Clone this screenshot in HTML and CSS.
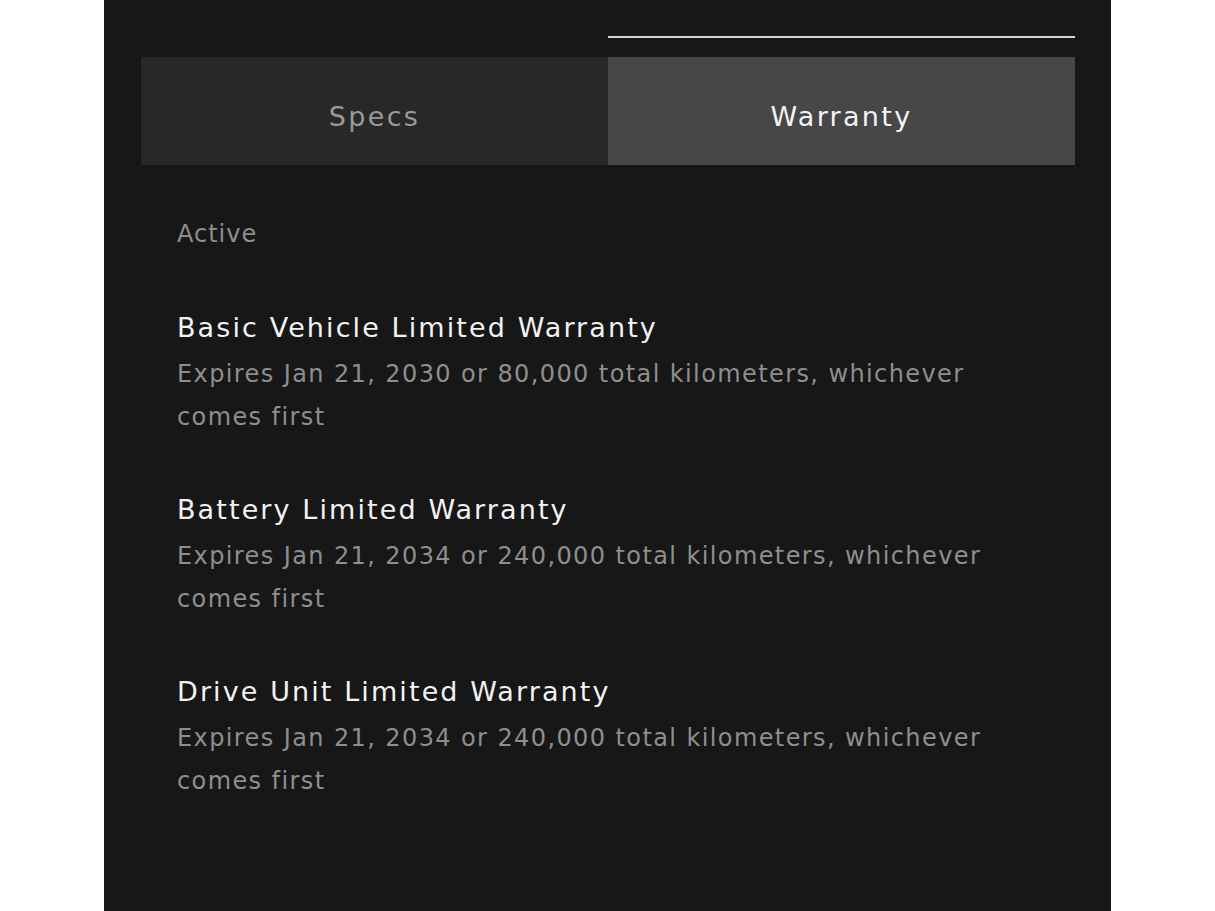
FILE: index.html
```html
<!DOCTYPE html>
<html lang="en">

<head>
    <meta charset="UTF-8">
    <meta name="viewport" content="width=device-width, initial-scale=1.0">
    <title>Warranty</title>
    <link rel="stylesheet" href="styles.css">
</head>

<body>
    <div class="panel">
        <div class="tab-indicator">
            <span></span>
            <span class="on"></span>
        </div>
        <div class="tabs">
            <a href="#" class="tab">Specs</a>
            <a href="#" class="tab active">Warranty</a>
        </div>

        <main class="warranty-list">
            <div class="section-label">Active</div>

            <div class="warranty">
                <div class="warranty-title">Basic Vehicle Limited Warranty</div>
                <div class="warranty-desc">Expires Jan 21, 2030 or 80,000 total kilometers, whichever comes first</div>
            </div>

            <div class="warranty">
                <div class="warranty-title">Battery Limited Warranty</div>
                <div class="warranty-desc">Expires Jan 21, 2034 or 240,000 total kilometers, whichever comes first</div>
            </div>

            <div class="warranty">
                <div class="warranty-title">Drive Unit Limited Warranty</div>
                <div class="warranty-desc">Expires Jan 21, 2034 or 240,000 total kilometers, whichever comes first</div>
            </div>
        </main>
    </div>
</body>

</html>
```

FILE: styles.css
```css
body {
    margin: 0;
    background-color: white;
    font-family: "DejaVu Sans", sans-serif;
}

.panel {
    width: 1007px;
    height: 911px;
    margin-left: 104px;
    background-color: #171717;
    padding: 0 36px 0 37px;
    box-sizing: border-box;
    overflow: hidden;
}

.tab-indicator {
    display: grid;
    grid-template-columns: 467px 1fr;
    padding-top: 36px;
    height: 2px;
}

.tab-indicator .on {
    background-color: #d4d4d4;
}

.tabs {
    display: grid;
    grid-template-columns: 467px 1fr;
    margin-top: 19px;
    height: 108px;
}

.tab {
    display: flex;
    align-items: center;
    justify-content: center;
    padding-top: 10px;
    text-decoration: none;
    font-size: 27px;
    letter-spacing: 2.3px;
    color: #999999;
    background-color: #282828;
}

.tab.active {
    color: #f4f4f4;
    background-color: #474747;
}

.warranty-list {
    padding: 54px 0 0 36px;
}

.section-label {
    font-size: 24px;
    line-height: 30px;
    letter-spacing: 1px;
    color: #8e8e8e;
    margin-bottom: 56px;
}

.warranty {
    margin-bottom: 48px;
}

.warranty-title {
    font-size: 27px;
    line-height: 46px;
    letter-spacing: 2.1px;
    color: #f2f2f2;
}

.warranty-desc {
    padding-top: 2px;
    font-size: 24px;
    line-height: 43px;
    letter-spacing: 1.4px;
    color: #8e8e8e;
    max-width: 820px;
}
```
